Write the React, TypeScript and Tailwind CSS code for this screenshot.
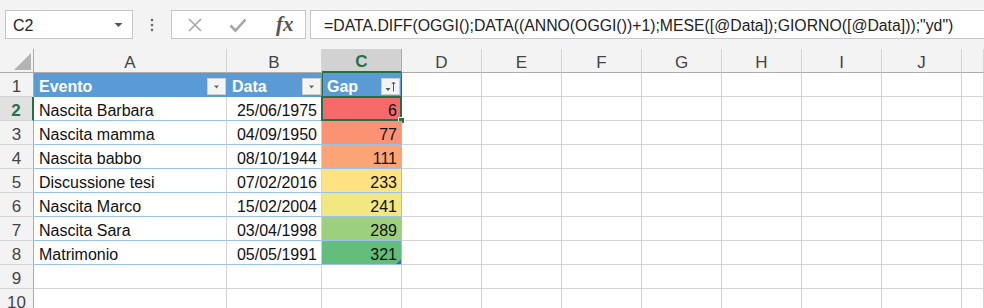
import React from "react";

const FONT = { fontFamily: '"Liberation Sans", Arial, sans-serif' };

type Row = { evento: string; data: string; gap: number; color: string };

const rows: Row[] = [
  { evento: "Nascita Barbara", data: "25/06/1975", gap: 6, color: "bg-[#f8696b]" },
  { evento: "Nascita mamma", data: "04/09/1950", gap: 77, color: "bg-[#fa9273]" },
  { evento: "Nascita babbo", data: "08/10/1944", gap: 111, color: "bg-[#fba577]" },
  { evento: "Discussione tesi", data: "07/02/2016", gap: 233, color: "bg-[#fee283]" },
  { evento: "Nascita Marco", data: "15/02/2004", gap: 241, color: "bg-[#f1e783]" },
  { evento: "Nascita Sara", data: "03/04/1998", gap: 289, color: "bg-[#9ccf7e]" },
  { evento: "Matrimonio", data: "05/05/1991", gap: 321, color: "bg-[#63be7b]" },
];

const letters = ["A", "B", "C", "D", "E", "F", "G", "H", "I", "J", ""];

function FilterButton({ sorted }: { sorted?: boolean }) {
  return (
    <div className="ml-auto mr-px flex h-[17px] w-[19px] items-center justify-center border border-[#cfcfcf] bg-[#f4f4f4]">
      <svg width="15" height="13" viewBox="0 0 15 13">
        {sorted ? (
          <>
            <path d="M2.5 8h5l-2.5 3z" fill="#555" />
            <path d="M10.5 11.5V2M8.8 4 10.5 2l1.7 2" stroke="#555" strokeWidth="1" fill="none" />
          </>
        ) : (
          <path d="M5 5.5h5l-2.5 3z" fill="#666" />
        )}
      </svg>
    </div>
  );
}

function TopBar() {
  return (
    <div className="flex h-[49px] items-start bg-[#f3f3f3] pt-[10px]">
      <div className="ml-[5px] flex h-[29px] w-[128px] items-center border border-[#c6c6c6] bg-white pl-[7px] pr-[9px] text-[16px] text-[#222]">
        <span className="pt-[2px]">C2</span>
        <svg className="ml-auto" width="9" height="6" viewBox="0 0 9 6">
          <path d="M0.5 1h8L4.5 5z" fill="#555" />
        </svg>
      </div>
      <div className="flex h-[29px] w-[38px] items-center justify-center">
        <svg width="4" height="14" viewBox="0 0 4 14">
          <circle cx="2" cy="2" r="1.3" fill="#666" />
          <circle cx="2" cy="7" r="1.3" fill="#666" />
          <circle cx="2" cy="12" r="1.3" fill="#666" />
        </svg>
      </div>
      <div className="flex h-[29px] w-[135px] items-center border border-[#c6c6c6] bg-white">
        <svg className="ml-[15px]" width="16" height="16" viewBox="0 0 16 16">
          <path d="M2 2 14 14M14 2 2 14" stroke="#a6a6a6" strokeWidth="1.6" />
        </svg>
        <svg className="ml-[26px]" width="18" height="16" viewBox="0 0 18 16">
          <path d="M1.5 8.5 6.5 13.5 16.5 2.5" stroke="#a6a6a6" strokeWidth="2.6" fill="none" />
        </svg>
        <span
          className="ml-[29px] text-[21px] font-bold italic leading-none text-[#555]"
          style={{ fontFamily: '"Liberation Serif", "Times New Roman", serif' }}
        >
          fx
        </span>
      </div>
      <div className="ml-[4px] flex h-[29px] flex-1 items-center border border-r-0 border-[#c6c6c6] bg-white pl-[13px] pt-[2px] text-[15.8px] text-[#222]">
        =DATA.DIFF(OGGI();DATA((ANNO(OGGI())+1);MESE([@Data]);GIORNO([@Data]));"yd")
      </div>
    </div>
  );
}

function HeaderRow() {
  return (
    <>
      <div className="relative h-6 border-r border-b border-[#ababab] bg-[#f3f3f3]">
        <svg className="absolute right-[2px] bottom-[2px]" width="17" height="17" viewBox="0 0 17 17">
          <path d="M17 0V17H0z" fill="#b4b4b4" />
        </svg>
      </div>
      {letters.map((l, i) => (
        <div
          key={i}
          className={
            l === "C"
              ? "flex h-6 items-center justify-center border-r border-b-2 border-r-[#ababab] border-b-[#217346] bg-[#d2d2d2] pt-[4px] text-[17px] font-bold text-[#217346]"
              : "flex h-6 items-center justify-center border-r border-b border-r-[#d4d4d4] border-b-[#ababab] bg-[#f3f3f3] pt-[4px] text-[17px] text-[#444]"
          }
        >
          {l}
        </div>
      ))}
    </>
  );
}

function RowHeader({ n, active }: { n: number; active?: boolean }) {
  return (
    <div
      className={
        active
          ? "flex h-6 items-center justify-center border-r-2 border-b border-r-[#217346] border-b-[#d4d4d4] bg-[#e1e1e1] pt-[4px] text-[17px] font-bold text-[#217346]"
          : "flex h-6 items-center justify-center border-r border-b border-r-[#ababab] border-b-[#d4d4d4] bg-[#f3f3f3] pt-[4px] text-[17px] text-[#444]"
      }
    >
      {n}
    </div>
  );
}

function EmptyCells({ count }: { count: number }) {
  return (
    <>
      {Array.from({ length: count }).map((_, i) => (
        <div key={i} className="h-6 border-r border-b border-[#d4d4d4] bg-white" />
      ))}
    </>
  );
}

export default function App() {
  return (
    <div className="h-[308px] w-[984px] overflow-hidden bg-white" style={FONT}>
      <TopBar />
      <div className="grid grid-cols-[34px_193px_95px_80px_80px_80px_80px_80px_80px_80px_80px_1fr]">
        <HeaderRow />

        <RowHeader n={1} />
        <div className="flex h-6 items-center border-b border-[#5b9bd5] bg-[#5b9bd5] pl-[5px] pt-[4px] text-[16px] font-bold text-white">
          Evento
          <FilterButton />
        </div>
        <div className="flex h-6 items-center border-b border-[#5b9bd5] bg-[#5b9bd5] pl-[5px] pt-[4px] text-[16px] font-bold text-white">
          Data
          <FilterButton />
        </div>
        <div className="flex h-6 items-center border-x border-b border-x-[#2e6e4a] border-b-[#5b9bd5] bg-[#5b9bd5] pl-[4px] pt-[4px] text-[16px] font-bold text-white">
          Gap
          <FilterButton sorted />
        </div>
        <EmptyCells count={8} />

        {rows.map((r, i) => {
          const last = i === rows.length - 1;
          return (
            <React.Fragment key={r.evento}>
              <RowHeader n={i + 2} active={i === 0} />
              <div className="flex h-6 items-center border-r border-b border-r-[#d4d4d4] border-b-[#9bc2e6] bg-white pl-[5px] pt-[4px] text-[16px] text-[#111]">
                {r.evento}
              </div>
              <div className="flex h-6 items-center justify-end border-r border-b border-r-[#d4d4d4] border-b-[#9bc2e6] bg-white pr-[4px] pt-[4px] text-[16px] text-[#111]">
                {r.data}
              </div>
              <div
                className={`relative flex h-6 items-center justify-end border-r border-b border-r-[#9bc2e6] border-b-[#9bc2e6] pr-[4px] pt-[4px] text-[16px] text-[#111] ${r.color}`}
              >
                {r.gap}
                {i === 0 && (
                  <>
                    <div className="pointer-events-none absolute -top-px -right-px -bottom-px -left-px border-2 border-[#217346]" />
                    <div className="absolute -right-[4px] -bottom-[4px] h-[7px] w-[7px] border border-white bg-[#217346]" />
                  </>
                )}
                {last && (
                  <svg className="absolute right-0 bottom-0" width="5" height="5" viewBox="0 0 5 5">
                    <path d="M5 0V5H0z" fill="#3f66c6" />
                  </svg>
                )}
              </div>
              <EmptyCells count={8} />
            </React.Fragment>
          );
        })}

        <RowHeader n={9} />
        <EmptyCells count={11} />
        <RowHeader n={10} />
        <EmptyCells count={11} />
      </div>
    </div>
  );
}
